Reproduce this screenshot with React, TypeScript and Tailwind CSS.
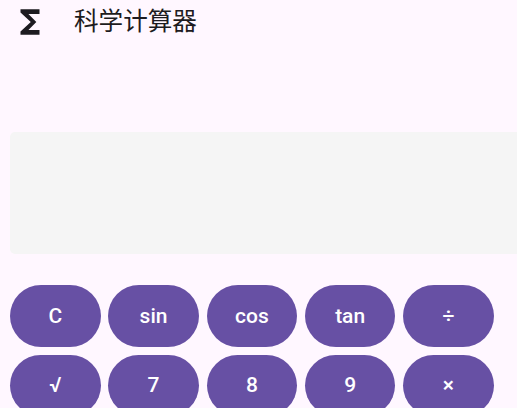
const rows = [["C","sin","cos","tan","÷"],["√","7","8","9","×"]];
export default function App() {
  return (
    <div className="h-[408px] w-[517px] overflow-hidden bg-[#fff7ff] font-['Roboto','Noto_Sans_CJK_SC',sans-serif]">
      <header className="flex h-[44px] items-center">
        <svg className="ml-[11.4px] h-[38px] w-[38px] shrink-0 text-[#1d1b20]" viewBox="0 0 24 24" fill="currentColor"><path d="M18 4H6v2l6.5 6L6 18v2h12v-3h-7l5-5-5-5h7z"/></svg>
        <h1 className="ml-[24.6px] text-[24.6px] font-normal leading-[32px] text-[#1d1b20]">科学计算器</h1>
      </header>
      <div className="ml-[10px] mt-[88px] h-[122.4px] rounded-l-[5px] bg-[#f5f5f5]" />
      <div className="ml-[10px] mt-[30.6px] flex flex-col gap-[7.9px]">
        {rows.map((r, i) => (
          <div key={i} className="flex gap-[7.8px]">
            {r.map(k => <button key={k} className="flex h-[61.8px] w-[90.5px] items-center justify-center rounded-[31px] bg-[#6750a4] pt-[1px] text-[21px] font-medium text-white">{k}</button>)}
          </div>
        ))}
      </div>
    </div>
  );
}
